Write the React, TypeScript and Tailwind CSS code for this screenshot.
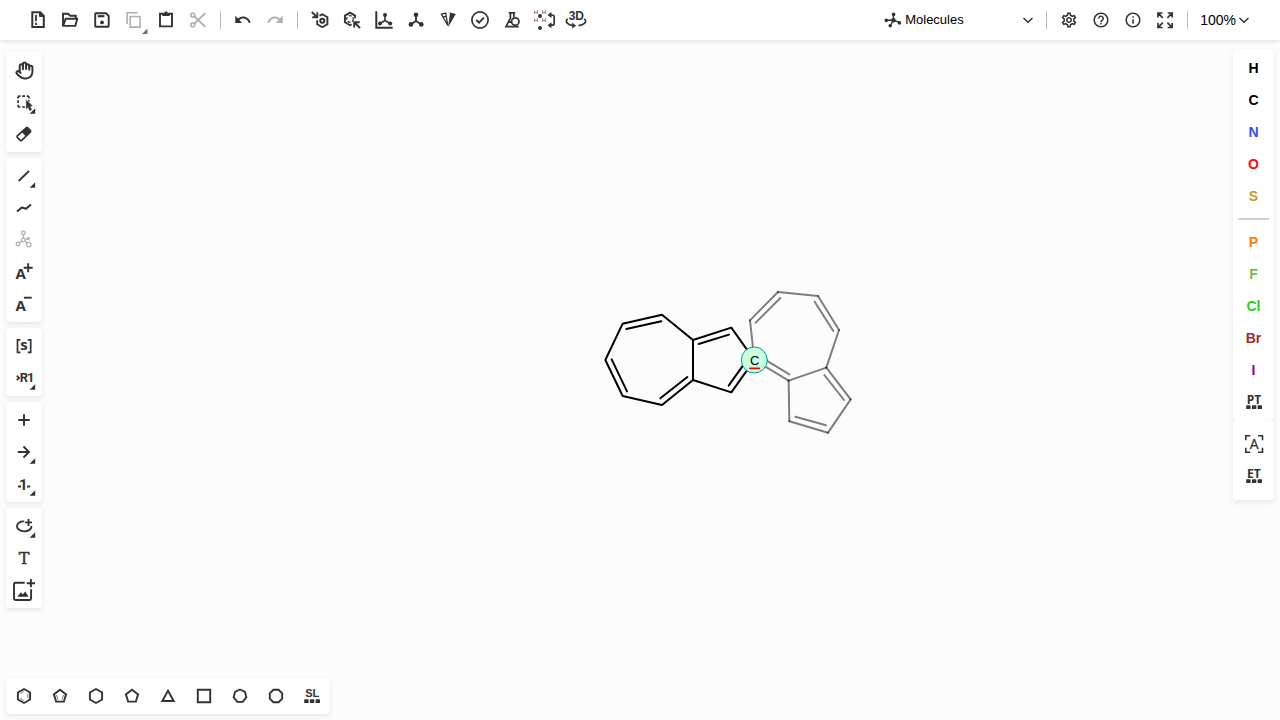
import type { ReactNode } from "react";
import { Hand } from "lucide-react";
import { MdHelpOutline, MdInfoOutline, MdOutlineSettings } from "react-icons/md";

const INK = "#333333";

function Glyph({ children, muted = false }: { children: ReactNode; muted?: boolean }) {
  return (
    <svg
      viewBox="0 0 32 32"
      fill="none"
      stroke="currentColor"
      strokeWidth="1.9"
      aria-hidden="true"
      className={muted ? "size-8 shrink-0 text-[#b0b0b0]" : "size-8 shrink-0 text-[#333333]"}
    >
      {children}
    </svg>
  );
}

function Tool({ label, children, disabled }: { label: string; children: ReactNode; disabled?: boolean }) {
  return (
    <button
      type="button"
      title={label}
      aria-label={label}
      disabled={disabled}
      className="flex size-8 shrink-0 items-center justify-center rounded"
    >
      {children}
    </button>
  );
}

const More = () => <path d="M27.2 22.2v5.6h-5.6z" fill="currentColor" stroke="none" />;

const Dots = ({ y }: { y: number }) => (
  <g fill="currentColor" stroke="none">
    <rect x="8.2" y={y} width="4.4" height="3.8" rx=".6" />
    <rect x="13.9" y={y} width="4.4" height="3.8" rx=".6" />
    <rect x="19.6" y={y} width="4.4" height="3.8" rx=".6" />
  </g>
);

const Separator = () => <div className="mx-1.5 h-[18px] w-px shrink-0 bg-[#b4b9d6]" />;

const Chevron = () => (
  <svg viewBox="0 0 12 12" fill="none" stroke={INK} strokeWidth="1.5" aria-hidden="true" className="size-3">
    <path d="M1.5 4 6 8.3 10.5 4" />
  </svg>
);

function Header() {
  return (
    <header className="relative z-10 flex h-10 shrink-0 items-center justify-between bg-white pr-[30px] pl-[22px] shadow-[0_2px_5px_rgba(103,104,132,0.15)]">
      <div className="flex items-center">
        <Tool label="Clear Canvas">
          <Glyph>
            <path d="M10.3 8.3h8l3.5 3.5v11.1H10.3z" strokeWidth="2" />
            <path d="M17.5 8v4.5H22z" fill="currentColor" strokeWidth="1" />
            <path d="M14 11v6.2M14 18.7v2.2" strokeWidth="1.8" />
          </Glyph>
        </Tool>
        <Tool label="Open">
          <Glyph>
            <path d="M9 22V9.8h5.2l2 2h5.6v3" />
            <path d="M9.2 21.9 11.6 14.8h11.7l-2 7.1z" strokeLinejoin="round" />
          </Glyph>
        </Tool>
        <Tool label="Save As">
          <Glyph>
            <path d="M10 9.3h10l2.7 2.7v10q0 .7-.7.7H10q-.8 0-.8-.7V10q0-.7.8-.7z" />
            <path d="M11.7 12.2h6.7" strokeWidth="2.2" />
            <circle cx="16" cy="18.4" r="1.9" fill="currentColor" stroke="none" />
          </Glyph>
        </Tool>
        <Tool label="Copy" disabled>
          <Glyph muted>
            <path d="M12.2 12.5h9.9v10.6h-9.9z" strokeWidth="1.6" />
            <path d="M9.1 20V8.8h10.6" strokeWidth="1.6" />
            <path d="M29.5 24.5V30H24z" fill="#707070" stroke="none" />
          </Glyph>
        </Tool>
        <Tool label="Paste">
          <Glyph>
            <path d="M10 9.8h12v12.6H10z" />
            <path d="M12.3 9h2l.6-1.5h2.2l.6 1.5h2v3h-7.4z" fill="currentColor" stroke="none" />
          </Glyph>
        </Tool>
        <Tool label="Cut" disabled>
          <Glyph muted>
            <circle cx="10.7" cy="11" r="2" strokeWidth="1.6" />
            <circle cx="10.7" cy="21" r="2" strokeWidth="1.6" />
            <path d="m12.3 12.3 11 10.6M12.3 19.7l11-10.6" />
          </Glyph>
        </Tool>
        <Separator />
        <Tool label="Undo">
          <Glyph>
            <path
              transform="translate(6.8 5.9) scale(.75 .82)"
              fill="currentColor"
              stroke="none"
              d="M12.5 8c-2.65 0-5.05.99-6.9 2.6L2 7v9h9l-3.62-3.62c1.39-1.16 3.16-1.88 5.12-1.88 3.54 0 6.55 2.31 7.6 5.5l2.37-.78C21.08 11.03 17.15 8 12.5 8z"
            />
          </Glyph>
        </Tool>
        <Tool label="Redo" disabled>
          <Glyph muted>
            <path
              transform="translate(25.2 5.9) scale(-.75 .82)"
              fill="currentColor"
              stroke="none"
              d="M12.5 8c-2.65 0-5.05.99-6.9 2.6L2 7v9h9l-3.62-3.62c1.39-1.16 3.16-1.88 5.12-1.88 3.54 0 6.55 2.31 7.6 5.5l2.37-.78C21.08 11.03 17.15 8 12.5 8z"
            />
          </Glyph>
        </Tool>
        <Separator />
        <Tool label="Aromatize">
          <Glyph>
            <path d="M15.5 11.7 18.3 10.3 23.4 13.3v6.9l-5.1 3-5.1-3v-4" />
            <circle cx="18.3" cy="16.8" r="2.1" />
            <path d="m7.8 8 4.6 4.6M13.3 8.3v5h-5" />
          </Glyph>
        </Tool>
        <Tool label="Dearomatize">
          <Glyph>
            <path d="M19.1 14.2v-2.6L14 8.7l-5.1 2.9v6.6l5.1 3 1.6-.8" />
            <circle cx="14" cy="15" r="3.3" strokeWidth="1.3" strokeDasharray="3 1.6" />
            <path d="m24 24-5-5M18.2 23.5v-5.3h5.5" />
          </Glyph>
        </Tool>
        <Tool label="Layout">
          <Glyph>
            <path d="M8.3 7.3v16.4h16.4" strokeWidth="2" />
            <path d="M17 10.8v5.7l-4.8 3M17 16.5l5 3" strokeWidth="1.6" />
            <g fill="currentColor" stroke="none">
              <circle cx="17" cy="11" r="2" />
              <circle cx="12" cy="19.5" r="2" />
              <circle cx="22.2" cy="19.5" r="2" />
            </g>
          </Glyph>
        </Tool>
        <Tool label="Clean Up">
          <Glyph>
            <path d="M16 11v6l-5 3.2M16 17l5 3.2" />
            <g fill="currentColor" stroke="none">
              <circle cx="16" cy="10.8" r="2.3" />
              <circle cx="10.9" cy="20.4" r="2.3" />
              <circle cx="21.3" cy="20.4" r="2.3" />
            </g>
          </Glyph>
        </Tool>
        <Tool label="Calculate CIP">
          <Glyph>
            <path d="M9.4 10.1 13.7 9 15.8 21.5zM10.8 13.2l3.5-1" strokeWidth="1.3" />
            <path d="m18 8.5 5.8 1.5-7.6 13z" fill="currentColor" stroke="none" />
          </Glyph>
        </Tool>
        <Tool label="Check Structure">
          <Glyph>
            <circle cx="16" cy="16" r="8.1" strokeWidth="1.7" />
            <path d="m12.3 16 2.7 2.7 4.9-5" />
          </Glyph>
        </Tool>
        <Tool label="Calculated Values">
          <Glyph>
            <path d="M12.7 8.8h6.6M14.4 9v5.2L10 22.7h12.8M17.8 9v4.5M12 18.2h3.5" strokeWidth="1.7" />
            <circle cx="19.3" cy="17.5" r="3.7" strokeWidth="1.7" />
          </Glyph>
        </Tool>
        <Tool label="Add/Remove explicit hydrogens">
          <Glyph>
            <g fill="#444444" stroke="none" className="font-['Liberation_Sans'] text-[6px]" textAnchor="middle">
              <text x="7.8" y="9.8">H</text>
              <text x="15.8" y="9.8">H</text>
              <text x="7.8" y="18.2">H</text>
              <text x="15.8" y="18.2">H</text>
            </g>
            <circle cx="12" cy="12" r="2" fill="currentColor" stroke="none" />
            <circle cx="12" cy="24" r="2" fill="currentColor" stroke="none" />
            <path d="M22 11h2.2q2 0 2 2v6.2q0 2-2 2H22" strokeWidth="1.7" />
            <path d="m23.5 8-4 3 4 3zM23.5 18.2l-4 3 4 3z" fill="currentColor" stroke="none" />
          </Glyph>
        </Tool>
        <Tool label="3D Viewer">
          <Glyph>
            <text
              x="16.3"
              y="16"
              textAnchor="middle"
              fill="currentColor"
              stroke="none"
              className="font-['Liberation_Sans'] text-[12px] font-bold"
            >
              3D
            </text>
            <path d="M7.7 14.8c-3.5 3 .5 6.4 5.3 6.8M24.3 14.8c3.5 3-.5 6.4-5.8 6.9" strokeWidth="1.7" />
            <path d="M12.2 18.6 16 21.8l-3.8 2.6z" fill="currentColor" stroke="none" />
          </Glyph>
        </Tool>
      </div>

      <div className="flex items-center">
        <div className="relative mr-1.5 flex w-[156px] items-center">
          <svg viewBox="0 0 18 18" fill={INK} stroke={INK} strokeWidth="1.4" aria-hidden="true" className="pointer-events-none absolute left-0 size-[18px]">
            <path d="M2.5 9.3 9.5 9 15.5 11.7M9.5 9.2 9.3 3.5M9.5 9 6.5 14.5" fill="none" />
            <g stroke="none">
              <circle cx="9.4" cy="9.2" r="2.3" />
              <circle cx="2.3" cy="9.4" r="1.8" />
              <circle cx="9.6" cy="3.4" r="1.8" />
              <circle cx="15.4" cy="11.9" r="1.8" />
              <circle cx="6.2" cy="14.7" r="1.8" />
            </g>
          </svg>
          <select aria-label="Editor mode" className="h-8 w-full appearance-none bg-transparent pl-[21px] text-[13px] text-black outline-none">
            <option>Molecules</option>
            <option>Macromolecules</option>
          </select>
          <span className="pointer-events-none absolute right-1.5">
            <Chevron />
          </span>
        </div>
        <div className="h-[18px] w-px bg-[#b4b9d6]" />
        <div className="ml-1.5 flex">
          <Tool label="Settings">
            <MdOutlineSettings size={18} color={INK} />
          </Tool>
          <Tool label="Help">
            <MdHelpOutline size={18} color={INK} />
          </Tool>
          <Tool label="About">
            <MdInfoOutline size={18} color={INK} />
          </Tool>
          <Tool label="Fullscreen mode">
            <Glyph>
              <path
                d="M13.5 9H9v4.5M9.2 9.2l4.6 4.6M18.7 9h4.5v4.5M23 9.2l-4.6 4.6M13.5 23.5H9V19M9.2 23.3l4.6-4.6M18.7 23.5h4.5V19M23 23.3l-4.6-4.6"
                strokeWidth="1.7"
              />
            </Glyph>
          </Tool>
        </div>
        <Separator />
        <button type="button" aria-label="Zoom 100%" className="ml-1.5 flex h-8 items-center gap-0.5 text-sm text-black">
          100%
          <Chevron />
        </button>
      </div>
    </header>
  );
}

function Panel({ children }: { children: ReactNode }) {
  return (
    <div className="flex w-9 flex-col items-center rounded bg-white py-0.5 shadow-[0_2px_5px_rgba(103,104,132,0.15)]">
      {children}
    </div>
  );
}

function LeftToolbar() {
  const bold = "font-['Open_Sans'] text-[15px] font-bold";
  return (
    <nav aria-label="Drawing tools" className="flex flex-col gap-1.5 pt-3 pl-1.5">
      <Panel>
        <Tool label="Hand tool">
          <Hand size={19} color={INK} strokeWidth={2.5} />
        </Tool>
        <Tool label="Rectangle Selection">
          <Glyph>
            <path
              d="M10.1 12.5v-1.3q0-1.1 1.1-1.1h1.3M14.2 10.1h2.8M18.7 10.1h1.2q1 0 1 1.1v1.3M10.1 14.2V17M10.1 18.7v1.2q0 1.1 1.1 1.1h1.3M14.2 21H17M20.9 14v1.5"
              strokeWidth="1.7"
            />
            <path d="m18.3 14.2 6 5.6-2.4.5 1.6 3.4-1.8.8-1.5-3.4-1.9 1.6z" fill="currentColor" stroke="currentColor" strokeWidth=".6" />
            <More />
          </Glyph>
        </Tool>
        <Tool label="Erase">
          <Glyph>
            <path d="M18.2 9.8q.8-.6 1.5 0l2.7 2.8q.6.7 0 1.4l-8.7 8.3q-.7.6-1.4 0l-3-3q-.6-.7 0-1.4z" strokeWidth="1.7" />
            <path d="m13.6 14 4.6-4.4q.8-.6 1.5 0l2.9 3q.6.7 0 1.4L18 18.5z" fill="currentColor" stroke="none" />
          </Glyph>
        </Tool>
      </Panel>
      <Panel>
        <Tool label="Single Bond">
          <Glyph>
            <path d="m10.7 21 10.3-10" strokeWidth="1.8" />
            <More />
          </Glyph>
        </Tool>
        <Tool label="Chain">
          <Glyph>
            <path d="m9 19.6 4.8-4.1 4.2 1.2 5-4.2" strokeLinejoin="round" strokeWidth="2" />
          </Glyph>
        </Tool>
        <Tool label="Stereochemistry" disabled>
          <Glyph muted>
            <g strokeWidth="1.3">
              <circle cx="15.4" cy="9" r="1.8" />
              <circle cx="15.4" cy="16" r="1.8" />
              <circle cx="10" cy="20" r="1.8" />
              <circle cx="20.8" cy="20.6" r="2.2" />
              <circle cx="20.4" cy="14.5" r="1" />
              <path d="M15.4 10.8v3.4M11.5 19l2.4-1.8M17 17.2l2.2 1.8M17.2 15.4l2.2-.6" />
            </g>
          </Glyph>
        </Tool>
        <Tool label="Charge Plus">
          <Glyph>
            <text x="7.6" y="23.3" fill="currentColor" stroke="none" className={bold}>A</text>
            <path d="M15.7 11.7h9M20.2 7.2v9" />
          </Glyph>
        </Tool>
        <Tool label="Charge Minus">
          <Glyph>
            <text x="7.6" y="23.3" fill="currentColor" stroke="none" className={bold}>A</text>
            <path d="M16 9.7h7.7" />
          </Glyph>
        </Tool>
      </Panel>
      <Panel>
        <Tool label="S-Group">
          <Glyph>
            <path d="M12.4 9.8H9.5v12.6h2.9M19.8 9.8h2.9v12.6h-2.9" strokeWidth="1.7" />
            <text x="16.1" y="19.6" textAnchor="middle" fill="currentColor" stroke="none" className={bold}>s</text>
          </Glyph>
        </Tool>
        <Tool label="R-Group Label">
          <Glyph>
            <path d="m8.7 13.6 2.4 2.3-2.4 2.3" strokeWidth="1.7" />
            <text x="11.8" y="20.4" fill="currentColor" stroke="none" className="font-['Roboto'] text-[13px] font-bold">R</text>
            <text x="19" y="20.4" fill="currentColor" stroke="none" className="font-['Roboto'] text-[13px] font-bold">1</text>
            <More />
          </Glyph>
        </Tool>
      </Panel>
      <Panel>
        <Tool label="Reaction Plus">
          <Glyph>
            <path d="M10.3 16h11.4M16 10.3v11.4" />
          </Glyph>
        </Tool>
        <Tool label="Arrow">
          <Glyph>
            <path d="M9.8 16h11M15.5 10.5 21 16l-5.5 5.5" />
            <More />
          </Glyph>
        </Tool>
        <Tool label="Mapping">
          <Glyph>
            <path d="M10 18.5h3M19 18.5h3" />
            <text x="15.4" y="22" textAnchor="middle" fill="currentColor" stroke="none" className="font-['Roboto'] text-[15px] font-bold">1</text>
            <More />
          </Glyph>
        </Tool>
      </Panel>
      <Panel>
        <Tool label="Shape Ellipse">
          <Glyph>
            <path d="M16.2 11.4c-4.2-.2-7.2 2-7.2 4.8s3 5.2 7.2 5.2 7.3-2.3 7.3-5.3" />
            <path d="M17 12.4h7M20.5 9v7" />
            <More />
          </Glyph>
        </Tool>
        <Tool label="Add text">
          <Glyph>
            <text x="16" y="22" textAnchor="middle" fill="currentColor" stroke="currentColor" strokeWidth=".4" className="font-['DejaVu_Serif',serif] text-[16px]">T</text>
          </Glyph>
        </Tool>
        <Tool label="Add image">
          <Glyph>
            <path d="M16.7 8.8H7.5q-1.5 0-1.5 1.5v14.2Q6 26 7.5 26h14.2q1.4 0 1.4-1.5v-9.3" />
            <path d="M18.7 9.2H27M22.9 5v8.3" />
            <path d="m9.3 22.8 3.6-4.6 2 2.3 2.3-3.1 3.4 5.4z" fill="currentColor" stroke="none" />
          </Glyph>
        </Tool>
      </Panel>
    </nav>
  );
}

function Atom({ symbol, color }: { symbol: string; color: string }) {
  return (
    <button type="button" className="size-8 text-sm font-bold" style={{ color }}>
      {symbol}
    </button>
  );
}

const COMMON = [
  { symbol: "H", color: "#000000" },
  { symbol: "C", color: "#000000" },
  { symbol: "N", color: "#304ff7" },
  { symbol: "O", color: "#ff0d0d" },
  { symbol: "S", color: "#c99a19" },
];

const EXTRA = [
  { symbol: "P", color: "#ff8000" },
  { symbol: "F", color: "#78bc42" },
  { symbol: "Cl", color: "#1fd01f" },
  { symbol: "Br", color: "#a62929" },
  { symbol: "I", color: "#940094" },
];

function TableGlyph({ text }: { text: string }) {
  return (
    <Glyph>
      <text x="15.9" y="17.5" textAnchor="middle" fill="currentColor" stroke="none" className="font-['Open_Sans'] text-[12px] font-bold">
        {text}
      </text>
      <Dots y={19.2} />
    </Glyph>
  );
}

function RightToolbar() {
  return (
    <nav aria-label="Atoms" className="flex flex-col pt-2.5 pr-1.5">
      <div className="flex w-[41px] flex-col items-center rounded bg-white py-0.5 shadow-[0_2px_5px_rgba(103,104,132,0.15)]">
        {COMMON.map((a) => (
          <Atom key={a.symbol} {...a} />
        ))}
        <div className="my-1.5 h-0.5 w-[31px] bg-[#c8d0dd]" />
        {EXTRA.map((a) => (
          <Atom key={a.symbol} {...a} />
        ))}
        <Tool label="Periodic Table">
          <TableGlyph text="PT" />
        </Tool>
      </div>
      <div className="flex w-[41px] flex-col items-center rounded bg-white py-2 shadow-[0_2px_5px_rgba(103,104,132,0.15)]">
        <Tool label="Any atom">
          <Glyph>
            <path d="M12.3 7.8H7.8v4.5M20 7.8h4.5v4.5M12.3 24.2H7.8v-4.5M20 24.2h4.5v-4.5" strokeWidth="1.6" />
            <text x="16.1" y="21" textAnchor="middle" fill="currentColor" stroke="currentColor" strokeWidth=".3" className="font-['Open_Sans'] text-[14px]">A</text>
          </Glyph>
        </Tool>
        <Tool label="Extended Table">
          <TableGlyph text="ET" />
        </Tool>
      </div>
    </nav>
  );
}

const TEMPLATES: { label: string; art: ReactNode }[] = [
  {
    label: "Benzene",
    art: (
      <>
        <path d="m16 9 6.1 3.5v7L16 23l-6.1-3.5v-7z" />
        <path d="M19.9 13.6v4.8M12.3 13.5l3.4-2M12.3 18.5l3.4 2" strokeWidth="1" opacity=".65" />
      </>
    ),
  },
  {
    label: "Cyclopentadiene",
    art: (
      <>
        <path d="m16 9.8 6.1 4.6-2.2 7.2h-7.8l-2.2-7.2z" />
        <path d="m12.6 15 1.3 4.8M19.4 15l-1.3 4.8" strokeWidth="1" opacity=".65" />
      </>
    ),
  },
  { label: "Cyclohexane", art: <path d="m16 9 6.1 3.5v7L16 23l-6.1-3.5v-7z" /> },
  { label: "Cyclopentane", art: <path d="m16 9.8 6.1 4.6-2.2 7.2h-7.8l-2.2-7.2z" /> },
  { label: "Cyclopropane", art: <path d="m16 10.8 5.7 10.2H10.3z" /> },
  { label: "Cyclobutane", art: <path d="M9.8 9.8h12.4v12.4H9.8z" /> },
  { label: "Cycloheptane", art: <path d="m16 9.5 5 2.4 1.3 5.4-3.5 4.6h-5.6l-3.5-4.6 1.3-5.4z" /> },
  { label: "Cyclooctane", art: <path d="M13.4 9.8h5.2l3.6 3.6v5.2l-3.6 3.6h-5.2l-3.6-3.6v-5.2z" /> },
  {
    label: "Structure Library",
    art: (
      <>
        <text x="16.2" y="16.8" textAnchor="middle" fill="currentColor" stroke="none" className="font-['Liberation_Sans'] text-[11px] font-bold">
          SL
        </text>
        <Dots y={19.2} />
      </>
    ),
  },
];

function TemplateBar() {
  return (
    <nav aria-label="Templates" className="mb-1.5 ml-1.5 flex h-9 items-center gap-1 self-start rounded bg-white px-0.5 shadow-[0_2px_5px_rgba(103,104,132,0.15)]">
      {TEMPLATES.map((t) => (
        <Tool key={t.label} label={t.label}>
          <Glyph>{t.art}</Glyph>
        </Tool>
      ))}
    </nav>
  );
}

const PREVIEW_BONDS = [
  "M493 240 480 121",
  "M480 121 564 36",
  "M564 36 684 48",
  "M684 48 747 150",
  "M747 150 709 263",
  "M709 263 596 302",
  "M596 302 493 240",
  "M596 302 598 424",
  "M598 424 714 458",
  "M714 458 782 358",
  "M782 358 709 263",
  "M497 128 571 54",
  "M674 65 730 153",
  "M703 285 762 360",
  "M616 410 708 436",
  "M520 236 598 283",
];

function Molecule() {
  return (
    <svg
      viewBox="0 0 840 495"
      fill="none"
      strokeLinecap="round"
      strokeLinejoin="round"
      role="img"
      aria-label="Structure"
      className="absolute top-[240px] left-[590px] h-[165px] w-[280px]"
    >
      <g stroke="#000000" strokeWidth="6">
        <path d="M309 180 216 104 98 131 46 240 98 348 216 375 309 300zM309 180 424 143 493 240 424 337 309 300" />
        <path d="M109 147 214 124M65 238 111 334M211 355 292 291M326 192 417 164M416 317 470 241" />
      </g>
      <g stroke="#000000" strokeOpacity=".5" strokeWidth="6">
        {PREVIEW_BONDS.map((d) => (
          <path key={d} d={d} />
        ))}
      </g>
      <circle cx="493" cy="240" r="39" fill="#ccffdd" stroke="#0097a8" strokeWidth="3" />
      <text x="494" y="254" textAnchor="middle" fill="#000000" className="font-['Liberation_Sans'] text-[39px]">
        C
      </text>
      <path d="M480 265h28" stroke="#ff0000" strokeWidth="5.5" />
    </svg>
  );
}

export default function App() {
  return (
    <div className="flex min-h-screen flex-col bg-[#fcfcfc] font-['Liberation_Sans',sans-serif]">
      <Header />
      <main className="relative flex flex-1 flex-col justify-between">
        <Molecule />
        <div className="relative flex items-start justify-between">
          <LeftToolbar />
          <RightToolbar />
        </div>
        <div className="relative flex">
          <TemplateBar />
        </div>
      </main>
    </div>
  );
}
